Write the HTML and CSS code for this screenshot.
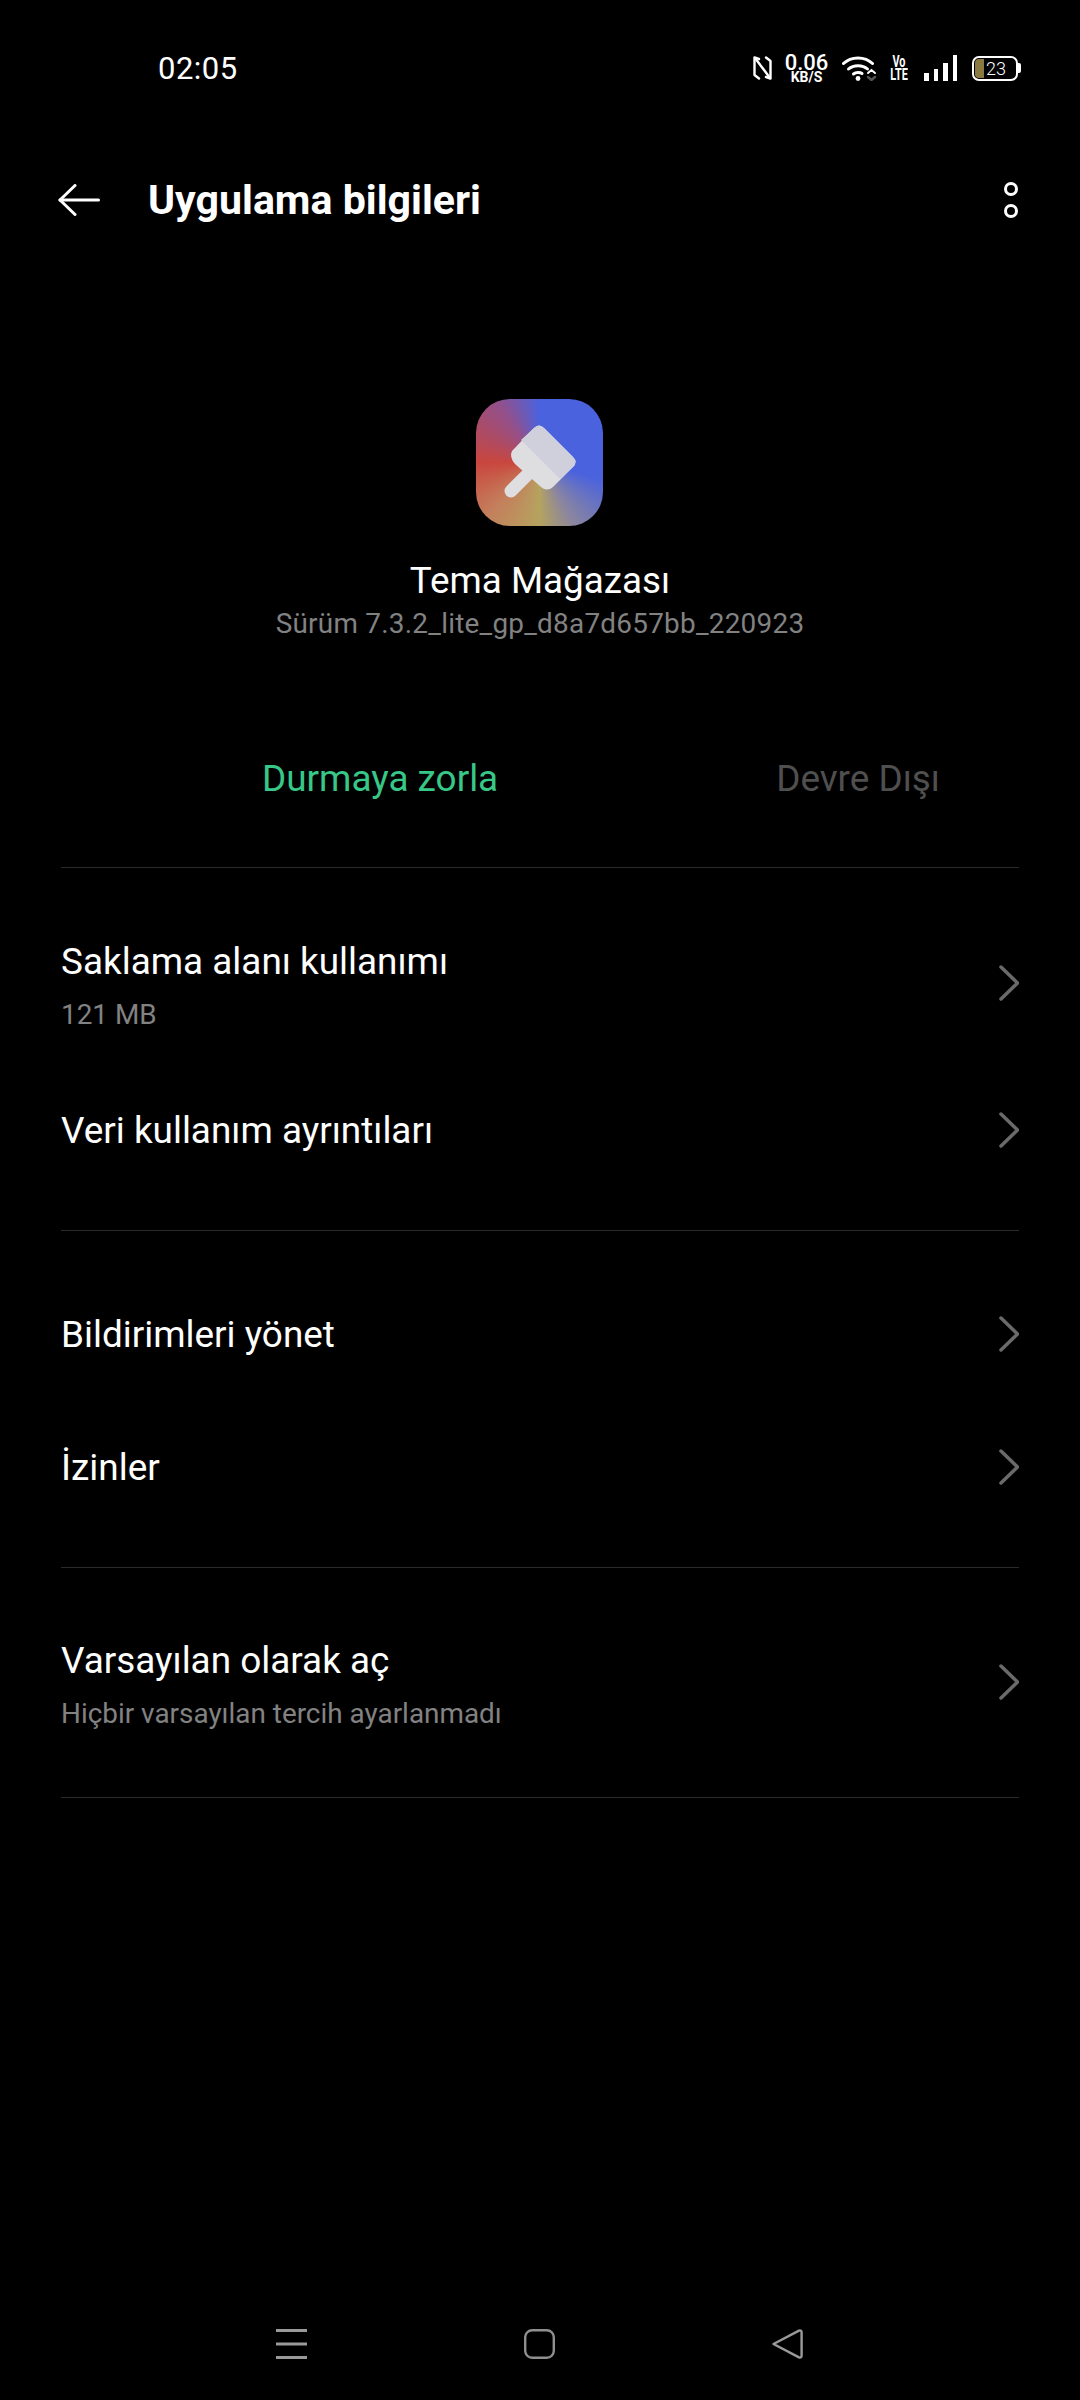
FILE: index.html
```html
<!DOCTYPE html>
<html lang="tr">
<head>
    <meta charset="UTF-8">
    <meta name="viewport" content="width=device-width, initial-scale=1.0">
    <title>Uygulama bilgileri</title>
    <link rel="stylesheet" href="styles.css">
</head>
<body>
    <div class="screen">
        <!-- Status bar -->
        <div class="status-bar">
            <span class="clock">02:05</span>
            <div class="status-icons">
                <svg class="ic-nfc" width="19" height="24" viewBox="0 0 19 24" fill="none" stroke="#fff" stroke-width="2.4" stroke-linecap="round" stroke-linejoin="round">
                    <path d="M6 3 L1.5 1.5 V19 L6 22.5"/>
                    <path d="M2 2 L17 22"/>
                    <path d="M13 1.5 L17.5 5 V22.5 L13 21"/>
                </svg>
                <div class="speed">
                    <span class="speed-num">0.06</span>
                    <span class="speed-unit">KB/S</span>
                </div>
                <svg class="ic-wifi" width="35" height="25" viewBox="0 0 35 25" fill="none" stroke="#fff" stroke-width="3" stroke-linecap="round">
                    <path d="M1.5 7.5 C9 0 23 0 30.5 7.5"/>
                    <path d="M6.5 13 C11.5 8.5 20.5 8.5 25.5 13"/>
                    <path d="M11.5 18 C14 16 18 16 20 17.5"/>
                    <circle cx="16" cy="22.5" r="2.4" fill="#fff" stroke="none"/>
                    <path d="M26 17 L29.5 14 L33 17" stroke-width="2"/>
                    <path d="M26 21 L29.5 24 L33 21" stroke="#555" stroke-width="2.4"/>
                </svg>
                <div class="volte">
                    <span>Vo</span>
                    <span>LTE</span>
                </div>
                <div class="signal">
                    <i class="bar-1"></i>
                    <i class="bar-2"></i>
                    <i class="bar-3"></i>
                    <i class="bar-4"></i>
                </div>
                <div class="battery">
                    <div class="battery-body">
                        <span class="battery-level"></span>
                        <span class="battery-num">23</span>
                    </div>
                    <span class="battery-cap"></span>
                </div>
            </div>
        </div>

        <!-- App bar -->
        <div class="app-bar">
            <svg class="back" width="42" height="32" viewBox="0 0 42 32" fill="none" stroke="#fff" stroke-width="3" stroke-linecap="round" stroke-linejoin="round">
                <path d="M40.5 16 H2"/>
                <path d="M17 1.5 L2 16 L17 30.5"/>
            </svg>
            <h1>Uygulama bilgileri</h1>
            <div class="more">
                <span></span>
                <span></span>
            </div>
        </div>

        <!-- App header -->
        <div class="app-head">
            <div class="app-icon">
                <svg width="127" height="127" viewBox="0 0 127 127">
                    <path d="M35 92 L52 75" stroke="#dfdfe1" stroke-width="13" stroke-linecap="round"/>
                    <path d="M58 29 Q63 24 68 29 L97 58 Q102 63 97 68 L77 88 Q71 93 65 88 L39 65 Q33 58 36 52 Z" fill="#dedee0"/>
                    <path d="M45 41 L58 29 Q63 24 68 29 L97 58 Q102 63 97 68 L84 80 Z" fill="#d0d0dc"/>
                </svg>
            </div>
            <div class="app-name">Tema Mağazası</div>
            <div class="app-version">Sürüm 7.3.2_lite_gp_d8a7d657bb_220923</div>
        </div>

        <div class="actions">
            <span class="action-on">Durmaya zorla</span>
            <span class="action-off">Devre Dışı</span>
        </div>

        <!-- Lists -->
        <div class="group group-storage">
            <div class="row row-tall">
                <div class="row-text">
                    <div class="row-title">Saklama alanı kullanımı</div>
                    <div class="row-sub">121 MB</div>
                </div>
                <svg class="chev" width="20" height="36" viewBox="0 0 20 36"><path d="M2 2 L18.5 18 L2 34"/></svg>
            </div>
            <div class="row row-tall row-plain">
                <div class="row-text">
                    <div class="row-title">Veri kullanım ayrıntıları</div>
                </div>
                <svg class="chev" width="20" height="36" viewBox="0 0 20 36"><path d="M2 2 L18.5 18 L2 34"/></svg>
            </div>
        </div>

        <div class="group group-notify">
            <div class="row row-plain">
                <div class="row-text">
                    <div class="row-title">Bildirimleri yönet</div>
                </div>
                <svg class="chev" width="20" height="36" viewBox="0 0 20 36"><path d="M2 2 L18.5 18 L2 34"/></svg>
            </div>
            <div class="row row-plain">
                <div class="row-text">
                    <div class="row-title">İzinler</div>
                </div>
                <svg class="chev" width="20" height="36" viewBox="0 0 20 36"><path d="M2 2 L18.5 18 L2 34"/></svg>
            </div>
        </div>

        <div class="group group-default">
            <div class="row row-tall">
                <div class="row-text">
                    <div class="row-title">Varsayılan olarak aç</div>
                    <div class="row-sub">Hiçbir varsayılan tercih ayarlanmadı</div>
                </div>
                <svg class="chev" width="20" height="36" viewBox="0 0 20 36"><path d="M2 2 L18.5 18 L2 34"/></svg>
            </div>
        </div>

        <!-- Nav bar -->
        <div class="nav-bar">
            <svg width="31" height="30" viewBox="0 0 31 30" stroke="#9a9a9a" stroke-width="3" fill="none">
                <path d="M0 1.5 H31"/>
                <path d="M0 15 H31"/>
                <path d="M0 28.5 H31"/>
            </svg>
            <svg width="31" height="30" viewBox="0 0 31 30" fill="none" stroke="#8f8f8f" stroke-width="2.4">
                <rect x="1.2" y="1.2" width="28.6" height="27.6" rx="7"/>
            </svg>
            <svg width="31" height="30" viewBox="0 0 31 30" fill="none" stroke="#9a9a9a" stroke-width="2.4" stroke-linejoin="round">
                <path d="M1.5 15 L27 1.6 Q29.6 0.8 29.6 3.5 V26.5 Q29.6 29.2 27 28.4 Z"/>
            </svg>
        </div>
    </div>
</body>
</html>
```

FILE: styles.css
```css
html, body {
    margin: 0;
    padding: 0;
    background-color: #000;
}

body {
    font-family: 'Roboto', sans-serif;
    color: #fff;
}

.screen {
    width: 1080px;
    height: 2400px;
    display: flex;
    flex-direction: column;
    overflow: hidden;
}

/* Status bar */
.status-bar {
    height: 136px;
    flex: none;
    display: flex;
    justify-content: space-between;
    align-items: center;
    padding-left: 158px;
    padding-right: 59px;
    box-sizing: border-box;
}

.clock {
    font-size: 31px;
    letter-spacing: 0.5px;
}

.status-icons {
    display: flex;
    align-items: center;
}

.ic-nfc {
    margin-right: 13px;
}

.speed {
    width: 43px;
    display: flex;
    flex-direction: column;
    align-items: center;
    font-weight: 500;
    margin-right: 14px;
}

.speed-num {
    font-size: 22px;
    line-height: 19px;
}

.speed-unit {
    font-size: 14px;
    line-height: 11px;
    font-weight: 700;
}

.ic-wifi {
    margin-right: 13px;
}

.volte {
    width: 18px;
    display: flex;
    flex-direction: column;
    align-items: center;
    font-size: 16px;
    line-height: 13px;
    font-weight: 700;
    margin-right: 16px;
    transform: scaleX(0.68);
}

.signal {
    display: flex;
    align-items: flex-end;
    gap: 5px;
    height: 26px;
    margin-right: 15px;
}

.signal i {
    display: block;
    width: 4.5px;
    background-color: #fff;
}

.bar-1 { height: 8px; }
.bar-2 { height: 12px; }
.bar-3 { height: 18px; }
.bar-4 { height: 26px; }

.battery {
    display: flex;
    align-items: center;
}

.battery-body {
    position: relative;
    width: 42px;
    height: 21px;
    border: 2px solid #fff;
    border-radius: 7px;
    display: flex;
    align-items: center;
    justify-content: center;
}

.battery-level {
    position: absolute;
    left: 1px;
    top: 1px;
    bottom: 1px;
    width: 9px;
    background-color: #8a7a40;
    border-radius: 4px 0 0 4px;
}

.battery-num {
    position: relative;
    font-size: 18px;
    font-weight: 300;
    padding-left: 2px;
}

.battery-cap {
    width: 3px;
    height: 10px;
    background-color: #fff;
    border-radius: 0 2px 2px 0;
}

/* App bar */
.app-bar {
    height: 128px;
    flex: none;
    display: flex;
    align-items: center;
    padding-left: 58px;
    padding-right: 62px;
}

.back {
    margin-right: 48px;
}

.app-bar h1 {
    flex: 1;
    margin: 0;
    font-size: 41.1px;
    font-weight: 700;
}

.more {
    display: flex;
    flex-direction: column;
    gap: 8px;
}

.more span {
    width: 14px;
    height: 14px;
    border: 3px solid #fff;
    border-radius: 50%;
    box-sizing: border-box;
}

/* App header */
.app-head {
    flex: none;
    display: flex;
    flex-direction: column;
    align-items: center;
    padding-top: 135px;
    height: 456px;
    box-sizing: border-box;
}

.app-icon {
    width: 127px;
    height: 127px;
    margin-right: 1px;
    border-radius: 34px;
    background: conic-gradient(from 0deg at 50% 50%, #4a62de 0deg, #4a62de 105deg, #8a85a0 150deg, #b5a35f 180deg, #c47f5c 225deg, #c9463e 270deg, #93508a 325deg, #4a62de 360deg);
}

.app-name {
    margin-top: 34px;
    font-size: 36.8px;
    line-height: 42px;
}

.app-version {
    margin-top: 4px;
    font-size: 27.9px;
    line-height: 36px;
    letter-spacing: 0.25px;
    color: #828282;
}

.actions {
    flex: none;
    height: 147px;
    box-sizing: border-box;
    padding: 0 140px 30px 262px;
    display: flex;
    justify-content: space-between;
    align-items: center;
    font-size: 36.9px;
}

.action-on {
    color: #37c888;
}

.action-off {
    color: #4f4f4f;
}

/* Lists */
.group {
    flex: none;
    margin-left: 61px;
    margin-right: 61px;
    border-top: 1px solid #2a2a2a;
    box-sizing: border-box;
}

.group-storage {
    height: 363px;
    padding-top: 41px;
}

.group-notify {
    height: 337px;
    padding-top: 37px;
}

.group-default {
    height: 231px;
    padding-top: 40px;
    border-bottom: 1px solid #2a2a2a;
}

.row {
    height: 133px;
    display: flex;
    justify-content: space-between;
    align-items: center;
}

.row-tall {
    height: 148px;
}

.row-plain .chev {
    margin-bottom: 2px;
}

.row-title {
    font-size: 36.9px;
    line-height: 44px;
}

.row-sub {
    margin-top: 13px;
    margin-bottom: -7px;
    font-size: 27.9px;
    line-height: 36px;
    color: #828282;
}

.chev {
    fill: none;
    stroke: #6a6a6a;
    stroke-width: 3.5;
    stroke-linecap: round;
    stroke-linejoin: round;
}

/* Nav bar */
.nav-bar {
    flex: none;
    margin-top: 531px;
    display: flex;
    justify-content: space-between;
    align-items: center;
    padding-left: 276px;
    padding-right: 277px;
    height: 30px;
}
```
